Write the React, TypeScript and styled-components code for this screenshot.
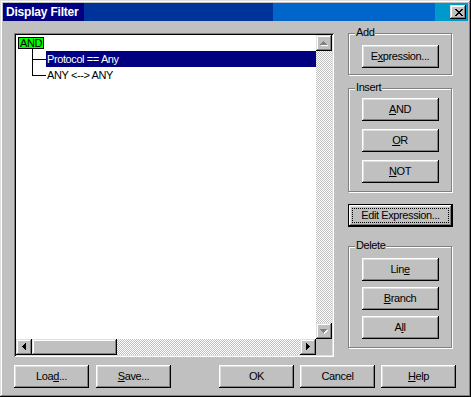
import React from "react";
import styled, { createGlobalStyle, css } from "styled-components";

const GlobalStyle = createGlobalStyle`
  html, body { margin: 0; padding: 0; background: #c0c0c0; }
  body {
    font-family: "Liberation Sans", Arial, sans-serif;
    font-size: 11px;
    letter-spacing: -0.4px;
    color: #000;
  }
  * { box-sizing: border-box; }
`;

const raised = css`
  background: #c0c0c0;
  box-shadow: inset -1px -1px #000, inset 1px 1px #fff, inset -2px -2px #808080,
    inset 2px 2px #dfdfdf;
`;

const raisedScroll = css`
  background: #c0c0c0;
  box-shadow: inset -1px -1px #000, inset 1px 1px #dfdfdf, inset -2px -2px #808080,
    inset 2px 2px #fff;
`;

const dither = css`
  background-color: #fff;
  background-image: repeating-conic-gradient(#c0c0c0 0% 25%, #fff 0% 50%);
  background-size: 2px 2px;
`;

const Window = styled.div`
  width: 471px;
  height: 397px;
  padding: 3px;
  background: #c0c0c0;
  display: flex;
  flex-direction: column;
  box-shadow: inset -1px -1px #000, inset 1px 1px #dfdfdf, inset -2px -2px #808080,
    inset 2px 2px #fff;
`;

const TitleBar = styled.div`
  height: 18px;
  display: flex;
  align-items: center;
  justify-content: space-between;
  padding: 0 2px 0 3px;
  background: linear-gradient(
    to right,
    #000080 0 81px,
    #003399 81px 270px,
    #0066cc 270px 432px,
    #0099cc 432px
  );
`;

const Title = styled.span`
  color: #fff;
  font-weight: bold;
  font-size: 12px;
  letter-spacing: -0.2px;
  line-height: 18px;
`;

const CloseButton = styled.div`
  ${raisedScroll};
  width: 16px;
  height: 14px;
  display: flex;
  align-items: center;
  justify-content: center;
  padding-left: 1px;
`;

const Body = styled.div`
  flex: 1;
  display: flex;
  flex-direction: column;
  padding: 12px 12px 0 11px;
`;

const Main = styled.div`
  display: flex;
  gap: 14px;
  padding-right: 3px;
`;

const ListBox = styled.div`
  width: 320px;
  height: 324px;
  padding: 2px;
  display: grid;
  grid-template-columns: 1fr 16px;
  grid-template-rows: 1fr 16px;
  background: #c0c0c0;
  box-shadow: inset 1px 1px #808080, inset -1px -1px #fff, inset 2px 2px #000,
    inset -2px -2px #dfdfdf;
`;

const TreeView = styled.div`
  background: #fff;
  overflow: hidden;
`;

const Row = styled.div`
  height: 16px;
  display: flex;
  align-items: flex-start;
`;

const RootNode = styled.span`
  margin: 2px 0 0 2px;
  height: 12px;
  line-height: 10px;
  padding: 0 1px;
  border: 1px solid #000;
  background: #00ff00;
  color: #000;
`;

const ChildRow = styled.div`
  height: 16px;
  display: flex;
  padding-left: 16px;
`;

const NodeLabel = styled.span<{ $selected?: boolean }>`
  flex: 1;
  height: 16px;
  line-height: 16px;
  padding-left: 1px;
  white-space: nowrap;
  background: ${(p) => (p.$selected ? "#000080" : "transparent")};
  color: ${(p) => (p.$selected ? "#fff" : "#000")};
`;

const VScroll = styled.div`
  display: flex;
  flex-direction: column;
`;

const HScroll = styled.div`
  display: flex;
`;

const Track = styled.div`
  flex: 1;
  ${dither};
`;

const ScrollButton = styled.div`
  ${raisedScroll};
  width: 16px;
  height: 16px;
  flex: none;
  display: flex;
  align-items: center;
  justify-content: center;
`;

const Thumb = styled.div<{ $size: number }>`
  ${raisedScroll};
  width: ${(p) => p.$size}px;
  flex: none;
`;

const Corner = styled.div`
  background: #c0c0c0;
`;

const SidePanel = styled.div`
  width: 105px;
  display: flex;
  flex-direction: column;
`;

const GroupBox = styled.div<{ $h: number; $pt: number; $gap: number; $mt: number }>`
  position: relative;
  width: 104px;
  height: ${(p) => p.$h}px;
  margin-top: ${(p) => p.$mt}px;
  padding-top: ${(p) => p.$pt}px;
  display: flex;
  flex-direction: column;
  align-items: center;
  gap: ${(p) => p.$gap}px;
  border: 1px solid #808080;
  box-shadow: inset 1px 1px #fff, 1px 1px #fff;
`;

const GroupLabel = styled.span`
  position: absolute;
  top: -8px;
  left: 6px;
  padding: 0 1px;
  line-height: 13px;
  background: #c0c0c0;
`;

const Button = styled.div<{ $w: number }>`
  ${raised};
  width: ${(p) => p.$w}px;
  height: 23px;
  flex: none;
  display: flex;
  align-items: center;
  justify-content: center;
  padding-bottom: 1px;
  white-space: nowrap;
  u {
    text-decoration: underline;
    text-underline-offset: 1px;
  }
`;

const DefaultButton = styled(Button)`
  position: relative;
  margin-top: 12px;
  box-shadow: inset 0 0 0 1px #000, inset -2px -2px #000, inset 2px 2px #fff,
    inset -3px -3px #808080, inset 3px 3px #dfdfdf;
  &::after {
    content: "";
    position: absolute;
    inset: 4px;
    border: 1px dotted #000;
  }
`;

const Footer = styled.div`
  margin-top: 8px;
  display: flex;
  justify-content: space-between;
`;

const ButtonGroup = styled.div<{ $gap: number }>`
  display: flex;
  gap: ${(p) => p.$gap}px;
`;

const CloseGlyph = () => {
  const pattern = [
    "XX....XX",
    ".XX..XX.",
    "..XXXX..",
    "...XX...",
    "..XXXX..",
    ".XX..XX.",
    "XX....XX",
  ];
  return (
    <svg width="8" height="7" shapeRendering="crispEdges">
      {pattern.flatMap((r, y) =>
        r.split("").map((c, x) =>
          c === "X" ? <rect key={`${x}-${y}`} x={x} y={y} width="1" height="1" fill="#000" /> : null
        )
      )}
    </svg>
  );
};

type Dir = "up" | "down" | "left" | "right";

const Arrow = ({ dir, disabled }: { dir: Dir; disabled?: boolean }) => {
  const vertical = dir === "up" || dir === "down";
  const w = vertical ? 7 : 4;
  const h = vertical ? 4 : 7;
  const rects: { x: number; y: number; w: number; h: number }[] = [];
  for (let i = 0; i < 4; i++) {
    if (dir === "up") rects.push({ x: 3 - i, y: i, w: 2 * i + 1, h: 1 });
    if (dir === "down") rects.push({ x: 3 - i, y: 3 - i, w: 2 * i + 1, h: 1 });
    if (dir === "left") rects.push({ x: i, y: 3 - i, w: 1, h: 2 * i + 1 });
    if (dir === "right") rects.push({ x: 3 - i, y: 3 - i, w: 1, h: 2 * i + 1 });
  }
  return (
    <svg width={w + 1} height={h + 1} shapeRendering="crispEdges">
      {disabled &&
        rects.map((r, i) => (
          <rect key={`s${i}`} x={r.x + 1} y={r.y + 1} width={r.w} height={r.h} fill="#fff" />
        ))}
      {rects.map((r, i) => (
        <rect key={i} x={r.x} y={r.y} width={r.w} height={r.h} fill={disabled ? "#808080" : "#000"} />
      ))}
    </svg>
  );
};

const Connector = ({ last }: { last?: boolean }) => (
  <svg width="14" height="16" shapeRendering="crispEdges" style={{ overflow: "visible", flex: "none" }}>
    <line x1="0.5" y1={-2} x2="0.5" y2={last ? 8.5 : 16} stroke="#000" />
    <line x1="0" y1="8.5" x2="14" y2="8.5" stroke="#000" />
  </svg>
);

export default function App() {
  return (
    <>
      <GlobalStyle />
      <Window>
        <TitleBar>
          <Title>Display Filter</Title>
          <CloseButton>
            <CloseGlyph />
          </CloseButton>
        </TitleBar>
        <Body>
          <Main>
            <ListBox>
              <TreeView>
                <Row>
                  <RootNode>AND</RootNode>
                </Row>
                <ChildRow>
                  <Connector />
                  <NodeLabel $selected>Protocol == Any</NodeLabel>
                </ChildRow>
                <ChildRow>
                  <Connector last />
                  <NodeLabel>ANY &lt;--&gt; ANY</NodeLabel>
                </ChildRow>
              </TreeView>
              <VScroll>
                <ScrollButton>
                  <Arrow dir="up" disabled />
                </ScrollButton>
                <Track />
                <ScrollButton>
                  <Arrow dir="down" disabled />
                </ScrollButton>
              </VScroll>
              <HScroll>
                <ScrollButton>
                  <Arrow dir="left" />
                </ScrollButton>
                <Thumb $size={85} />
                <Track />
                <ScrollButton>
                  <Arrow dir="right" />
                </ScrollButton>
              </HScroll>
              <Corner />
            </ListBox>
            <SidePanel>
              <GroupBox $h={42} $pt={11} $gap={0} $mt={0}>
                <GroupLabel>Add</GroupLabel>
                <Button $w={77}>
                  E<u>x</u>pression...
                </Button>
              </GroupBox>
              <GroupBox $h={104} $pt={9} $gap={8} $mt={13}>
                <GroupLabel>Insert</GroupLabel>
                <Button $w={77}>
                  <u>A</u>ND
                </Button>
                <Button $w={77}>
                  <u>O</u>R
                </Button>
                <Button $w={77}>
                  <u>N</u>OT
                </Button>
              </GroupBox>
              <DefaultButton $w={105}>Edit Expression...</DefaultButton>
              <GroupBox $h={102} $pt={11} $gap={6} $mt={19}>
                <GroupLabel>Delete</GroupLabel>
                <Button $w={77}>
                  Lin<u>e</u>
                </Button>
                <Button $w={77}>
                  <u>B</u>ranch
                </Button>
                <Button $w={77}>
                  A<u>l</u>l
                </Button>
              </GroupBox>
            </SidePanel>
          </Main>
          <Footer>
            <ButtonGroup $gap={7}>
              <Button $w={75}>
                Loa<u>d</u>...
              </Button>
              <Button $w={75}>
                <u>S</u>ave...
              </Button>
            </ButtonGroup>
            <ButtonGroup $gap={6}>
              <Button $w={75}>OK</Button>
              <Button $w={75}>Cancel</Button>
              <Button $w={75}>
                <u>H</u>elp
              </Button>
            </ButtonGroup>
          </Footer>
        </Body>
      </Window>
    </>
  );
}
